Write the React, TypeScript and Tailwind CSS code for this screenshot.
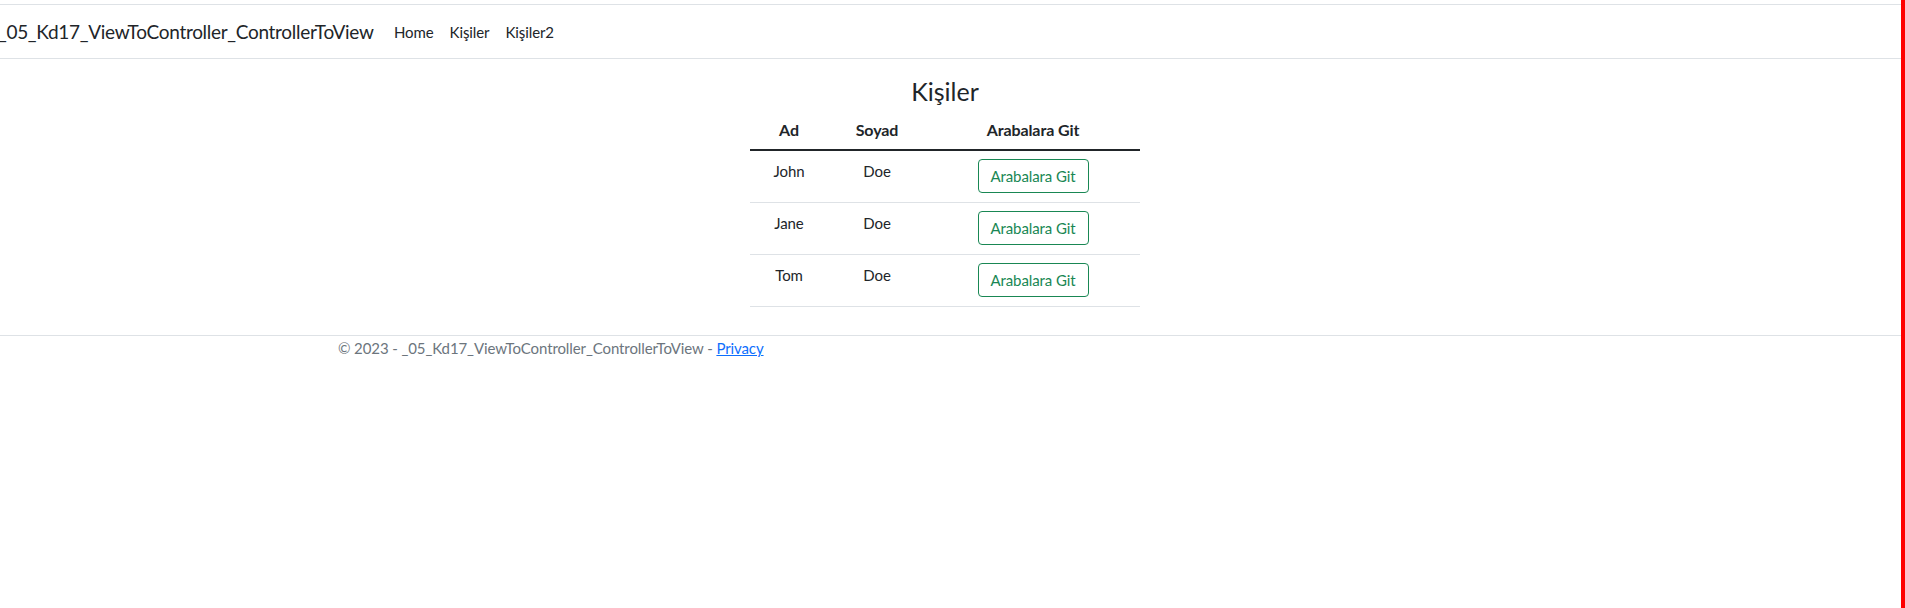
const people = [
  { ad: "John", soyad: "Doe" },
  { ad: "Jane", soyad: "Doe" },
  { ad: "Tom", soyad: "Doe" },
]

const navLinks = ["Home", "Kişiler", "Kişiler2"]

export default function App() {
  return (
    <div className="flex h-[608px] w-full bg-white font-['Lato',sans-serif] text-[#212529]">
      <div className="flex min-w-0 flex-1 flex-col">
        <div className="h-[5px] border-b border-[#dee2e6]" />

        {/* navbar */}
        <nav className="flex h-[54px] items-center overflow-hidden border-b border-[#dee2e6]">
          <a className="ml-[-2px] w-[388px] shrink-0 whitespace-nowrap text-[19px] leading-[30px] tracking-[-0.3px]">
            _05_Kd17_ViewToController_ControllerToView
          </a>
          <ul className="flex">
            {navLinks.map((link) => (
              <li key={link} className="px-2 text-[15px] leading-[24px] tracking-[-0.1px]">
                {link}
              </li>
            ))}
          </ul>
        </nav>

        {/* content */}
        <main className="flex w-[1890px] flex-col items-center pt-[18px]">
          <h2 className="h-[29px] text-[25px] leading-[29px]">Kişiler</h2>
          <div className="mt-[5px] w-[390px] text-[15px] tracking-[-0.1px]">
            <div className="grid h-[40px] grid-cols-[78px_98px_214px] items-center border-b-2 border-[#212529] text-center text-[16px] font-bold">
              <div>Ad</div>
              <div>Soyad</div>
              <div>Arabalara Git</div>
            </div>
            {people.map((p) => (
              <div
                key={p.ad}
                className="grid h-[52px] grid-cols-[78px_98px_214px] border-b border-[#dee2e6] text-center"
              >
                <div className="pt-2 leading-[24px]">{p.ad}</div>
                <div className="pt-2 leading-[24px]">{p.soyad}</div>
                <div className="flex justify-center pt-2">
                  <button className="h-[34px] w-[111px] rounded-[4px] border border-[#198754] text-[15px] leading-[24px] text-[#198754]">
                    Arabalara Git
                  </button>
                </div>
              </div>
            ))}
          </div>
        </main>

        {/* footer */}
        <footer className="mt-[28px] border-t border-[#dee2e6] pl-[338px] text-[15px] leading-[24px] tracking-[-0.1px] text-[#6c757d]">
          © 2023 - _05_Kd17_ViewToController_ControllerToView -{" "}
          <a className="text-[#0d6efd] underline">Privacy</a>
        </footer>
      </div>
      <div className="w-[4px] shrink-0 bg-[#ff0000]" />
    </div>
  )
}
